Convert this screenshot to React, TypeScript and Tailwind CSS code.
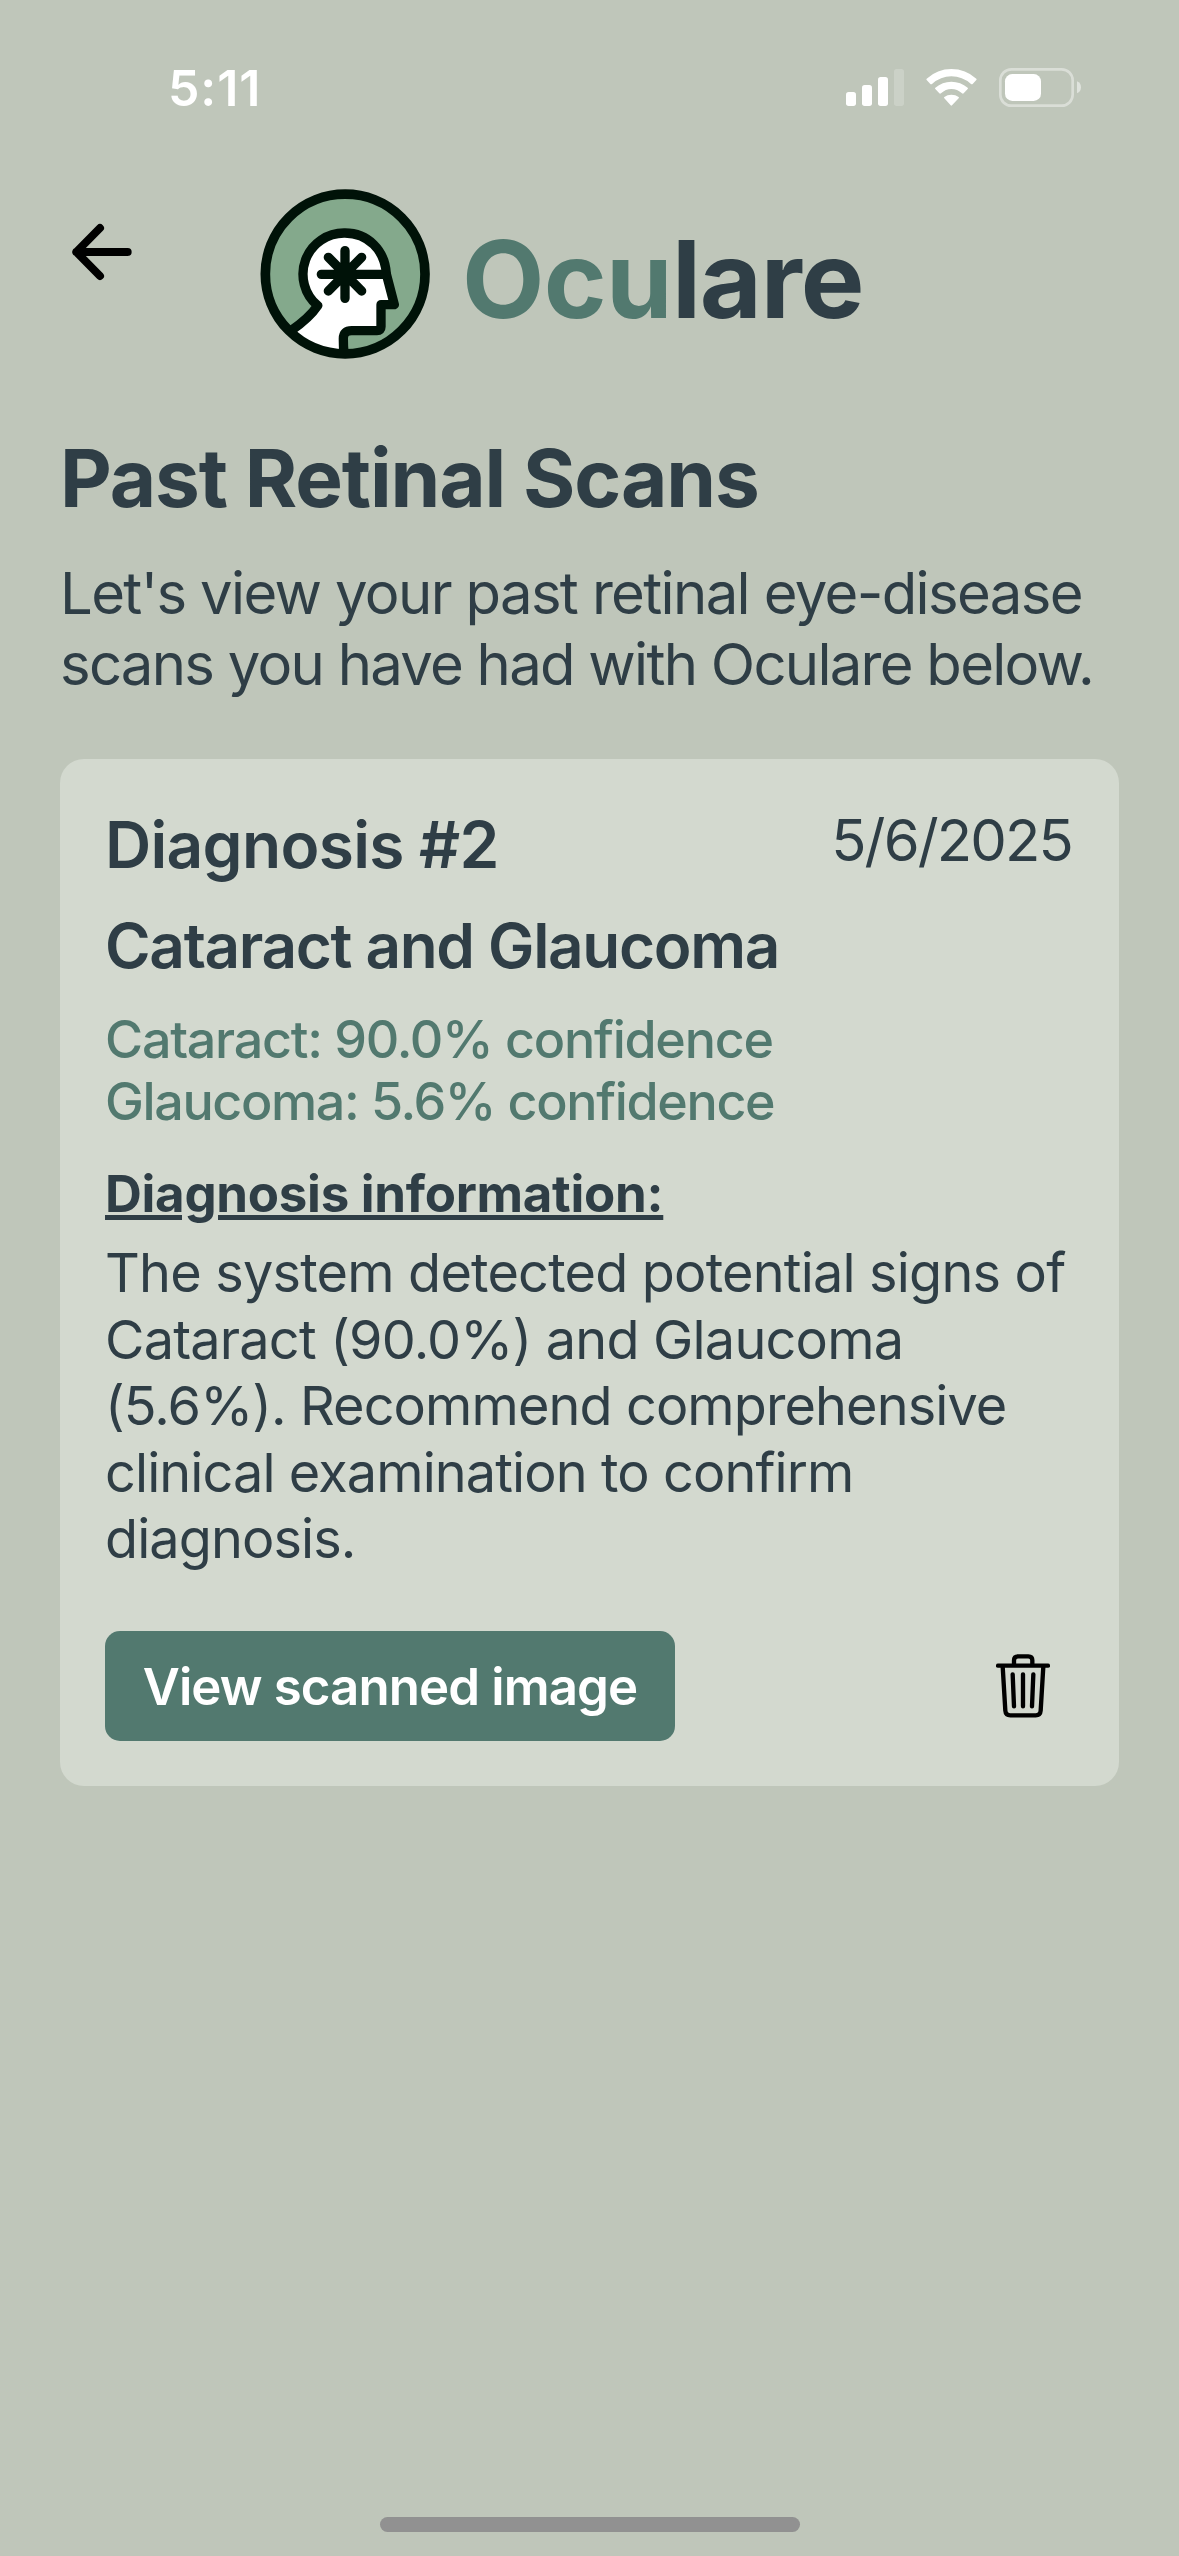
function StatusIcons() {
  return (
    <svg className="h-[39px] w-[235.33px]" viewBox="78 54 706 117" fill="#fff">
      <rect x="78" y="126" width="30" height="42" rx="8" />
      <rect x="126" y="105" width="30" height="63" rx="8" />
      <rect x="174" y="81" width="30" height="87" rx="8" />
      <rect x="222" y="57" width="30" height="111" rx="8" opacity="0.2" />
      <path d="M320 90Q318 88 320 86Q352 57 394 57Q437 57 469 86Q471 88 469 90L458 102Q456 104 453 102Q427 79 394 79Q362 79 336 102Q333 104 331 102Z" />
      <path d="M346 117Q344 115 346 113Q367 95 394 95Q422 95 443 113Q445 115 443 117L431 130Q429 132 426 130Q412 117 394 117Q377 117 363 130Q360 132 358 130Z" />
      <path d="M373 145Q371 143 373 141Q382 134 394 134Q407 134 416 141Q418 143 416 145L396 166Q394 168 392 166Z" />
      <rect x="541" y="58" width="217" height="109" rx="33" fill="none" stroke="#fff" strokeOpacity="0.42" strokeWidth="8" />
      <rect x="555" y="72" width="108" height="81" rx="22" />
      <path d="M771 94Q783 99 783 112Q783 125 771 130Z" opacity="0.5" />
    </svg>
  );
}

function BackArrow() {
  return (
    <svg className="h-[60px] w-[62px]" viewBox="66 66 186 180" fill="none" stroke="#000" strokeWidth="24" strokeLinecap="round" strokeLinejoin="round">
      <path d="M150 84L79 156L150 228M79 156H233" />
    </svg>
  );
}

function Logo() {
  return (
    <svg className="size-[170px] shrink-0" viewBox="59 57 510 510" fill="none" strokeLinecap="round" strokeLinejoin="round">
      <circle cx="314.500" cy="312" r="240" fill="#84a98c" />
      <path
        d="M157 479C186 462 212 437 232 407A123.500 123.500 0 1 1 437 305L440 322L462 404H422V470Q422 482 410 482H334Q309 482 309 506Q309 530 311 552Q225 552 157 479Z"
        fill="#fff"
      />
      <path
        d="M152 482C184 460 212 437 232 407A123.500 123.500 0 0 1 314 189C382 189 434 240 438 312L462 404H422V470Q422 482 410 482H334Q309 482 309 506Q309 530 311 550"
        stroke="#001208"
        strokeWidth="28"
      />
      <path d="M314 242V385M243 313H438M264 262L364 363M364 262L264 363" stroke="#001208" strokeWidth="28" />
      <circle cx="314" cy="313" r="35" fill="#001208" />
      <circle cx="314.500" cy="312" r="239.500" stroke="#001208" strokeWidth="29" />
    </svg>
  );
}

function TrashIcon() {
  return (
    <svg className="h-[64px] w-[54px]" viewBox="78 72 162 192" fill="none" stroke="#000" strokeWidth="13" strokeLinecap="round" strokeLinejoin="round">
      <path d="M84 107H234" />
      <path d="M132 104V91Q132 79 144 79H175Q187 79 187 91V104" />
      <path d="M98 109L106 242Q107 256 121 256H197Q211 256 212 242L220 109" />
      <path d="M128 133L132 229M159 133V229M190 133L186 229" />
    </svg>
  );
}

export default function App() {
  return (
    <div className="flex h-[2556px] w-[1179px] flex-col bg-[#bfc6ba] font-['Inter',sans-serif] text-[#2f3e46]">
      <div className="flex h-[118px] items-start justify-between pt-[58px] pr-[98px] pl-[168px]">
        <span className="text-[50px] leading-[61px] font-semibold tracking-[0.9px] text-white">5:11</span>
        <div className="pt-[10px]">
          <StatusIcons />
        </div>
      </div>

      <header className="flex h-[310px] items-start pt-[71px] pl-[72px]">
        <button className="mt-[33px] w-[188px]" aria-label="Back">
          <BackArrow />
        </button>
        <Logo />
        <div className="mt-[26px] ml-[32px] text-[107px] leading-[128px] font-bold tracking-[-1.1px]">
          <span className="tracking-[-0.7px] text-[#52796f]">Ocu</span>
          <span>lare</span>
        </div>
      </header>

      <main className="px-[60px]">
        <h1 className="text-[80px] leading-[100px] font-bold tracking-[-1.11px]">Past Retinal Scans</h1>
        <p className="mt-[30px] text-[58px] leading-[71px] tracking-[-1.64px] whitespace-nowrap">
          Let's view your past retinal eye-disease
          <br />
          <span className="tracking-[-1.73px]">scans you have had with Oculare below.</span>
        </p>

        <section className="mt-[59px] h-[1027px] rounded-[24px] bg-[#d3d9cf] px-[45px] pt-[46px]">
          <div className="flex items-start justify-between">
            <h2 className="text-[64px] leading-[80px] font-semibold tracking-[-0.7px]">Diagnosis #2</h2>
            <span className="-mt-px mr-[2px] text-[58px] leading-[72px] tracking-[-1.85px]">5/6/2025</span>
          </div>
          <h3 className="mt-[23px] text-[62px] leading-[76px] font-semibold tracking-[-1.32px]">Cataract and Glaucoma</h3>
          <p className="mt-[25px] text-[52px] leading-[61.7px] font-medium tracking-[-1.36px] text-[#52796f]">
            <span className="tracking-[-1.26px]">Cataract: 90.0% confidence</span>
            <br />
            Glaucoma: 5.6% confidence
          </p>
          <h4 className="mt-[31px] text-[51px] leading-[62px] font-bold tracking-[-0.28px] underline decoration-[5px] underline-offset-[3px]">
            Diagnosis information:
          </h4>
          <p className="mt-[15px] text-[54px] leading-[66.5px] tracking-[-0.9px] whitespace-nowrap">
            <span className="tracking-[-0.8px]">The system detected potential signs of</span>
            <br />
            <span className="tracking-[-0.8px]">Cataract (90.0%) and Glaucoma</span>
            <br />
            (5.6%). Recommend comprehensive
            <br />
            clinical examination to confirm
            <br />
            diagnosis.
          </p>
          <div className="mt-[58px] flex items-center justify-between pr-[24px]">
            <button className="h-[110px] w-[570px] rounded-[15px] bg-[#52796f] pt-[2px] text-[51px] font-semibold tracking-[-0.9px] text-white">
              View scanned image
            </button>
            <button aria-label="Delete">
              <TrashIcon />
            </button>
          </div>
        </section>
      </main>

      <div className="mx-auto mt-auto mb-[24px] h-[15px] w-[420px] rounded-full bg-[#919191]" />
    </div>
  );
}
